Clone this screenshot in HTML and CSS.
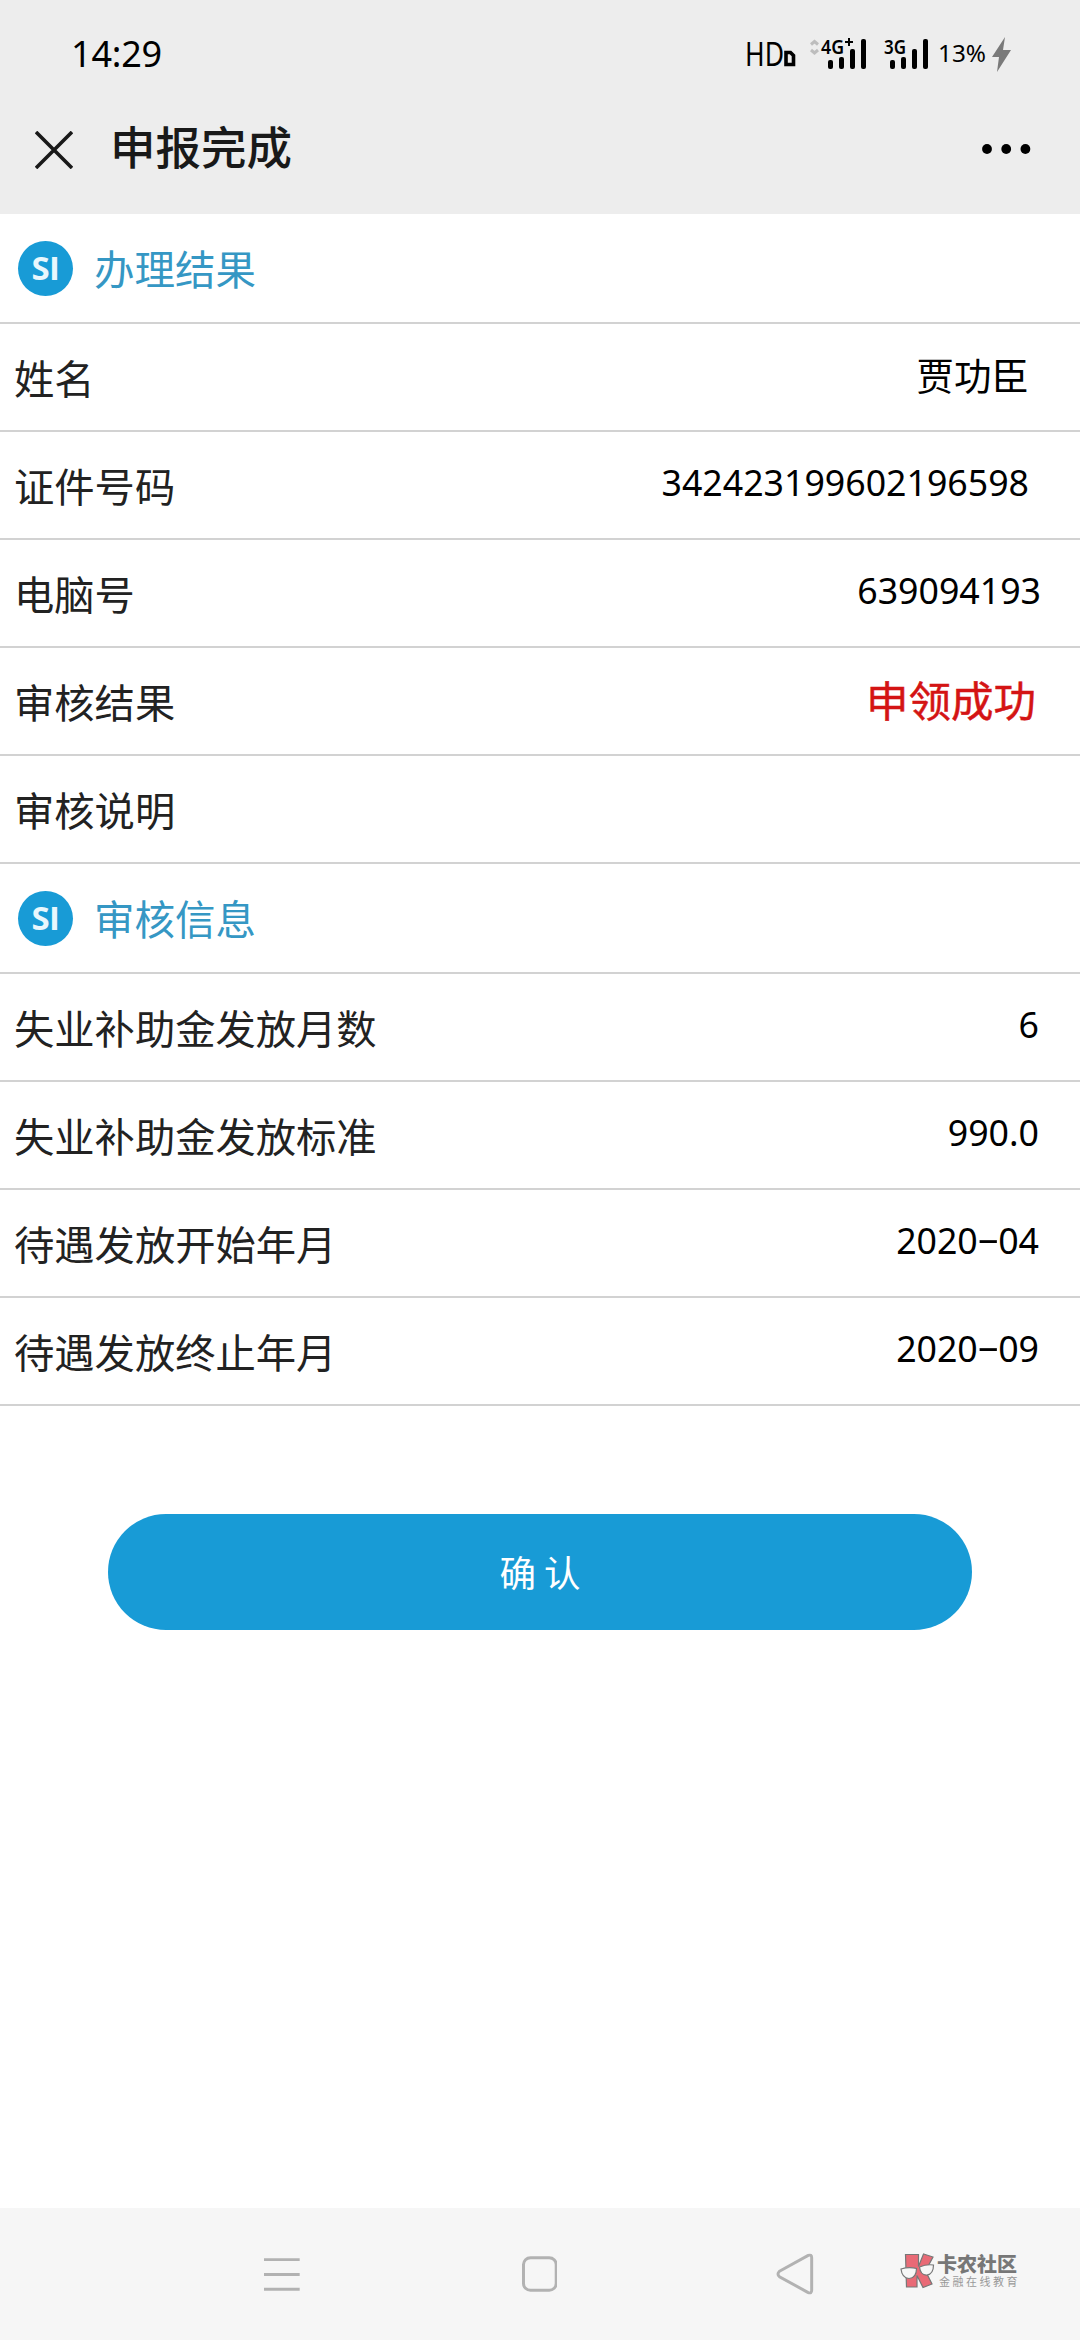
FILE: index.html
```html
<!DOCTYPE html>
<html lang="zh-CN">
<head>
<meta charset="utf-8">
<title>申报完成</title>
<link rel="stylesheet" href="styles.css">
</head>
<body>
<div class="screen">
  <header class="top">
    <div class="status">
      <span class="clock">14:29</span>
      <svg class="signals" width="300" height="54" viewBox="740 25 300 54">
        <text class="hd" x="745" y="66" textLength="39" lengthAdjust="spacingAndGlyphs">HD</text>
        <path d="M786 52.500h4.500l3 3v9h-7.500z" fill="none" stroke="#000" stroke-width="3.600"/>
        <path d="M811 44.500l3.500-3 3.500 3M811 50l3.500 3 3.500-3" fill="none" stroke="#bdbdbd" stroke-width="3"/>
        <g class="net">
          <text x="821" y="53.500" textLength="23" lengthAdjust="spacingAndGlyphs">4G</text>
          <text x="884" y="53.500" textLength="22" lengthAdjust="spacingAndGlyphs">3G</text>
        </g>
        <path d="M845 42h8M849 38v8" stroke="#000" stroke-width="2"/>
        <g fill="#000">
          <rect x="828" y="60" width="5" height="9" rx="2"/><rect x="839" y="57" width="5" height="12" rx="2"/><rect x="850" y="49" width="5" height="20" rx="2"/><rect x="861" y="39" width="5" height="30" rx="2"/>
          <rect x="890" y="60" width="5" height="9" rx="2"/><rect x="901" y="57" width="5" height="12" rx="2"/><rect x="912" y="49" width="5" height="20" rx="2"/><rect x="923" y="39" width="5" height="30" rx="2"/>
        </g>
        <text class="pct" x="938" y="62" textLength="48" lengthAdjust="spacingAndGlyphs">13%</text>
        <path d="M1005 37l-13 20h7l-2 15 14-22h-8z" fill="#7a7a7a"/>
      </svg>
    </div>
    <div class="titlebar">
      <svg class="close" width="38" height="38" viewBox="0 0 38 38"><path d="M1 1l36 36M37 1L1 37" stroke="#191919" stroke-width="3.600"/></svg>
      <h1 class="title">申报完成</h1>
      <svg class="more" width="50" height="10" viewBox="0 0 50 10"><circle cx="5" cy="5" r="4.900"/><circle cx="24.200" cy="5" r="4.900"/><circle cx="43.400" cy="5" r="4.900"/></svg>
    </div>
  </header>

  <main class="content">
    <section>
      <h2 class="section"><span class="badge">SI</span>办理结果</h2>
      <div class="row"><span class="label">姓名</span><span class="value name">贾功臣</span></div>
      <div class="row"><span class="label">证件号码</span><span class="value idno">342423199602196598</span></div>
      <div class="row"><span class="label">电脑号</span><span class="value pcno">639094193</span></div>
      <div class="row"><span class="label">审核结果</span><span class="value success">申领成功</span></div>
      <div class="row"><span class="label">审核说明</span></div>
    </section>
    <section>
      <h2 class="section"><span class="badge">SI</span>审核信息</h2>
      <div class="row"><span class="label">失业补助金发放月数</span><span class="value">6</span></div>
      <div class="row"><span class="label">失业补助金发放标准</span><span class="value">990.0</span></div>
      <div class="row"><span class="label">待遇发放开始年月</span><span class="value">2020<span class="dash">-</span>04</span></div>
      <div class="row"><span class="label">待遇发放终止年月</span><span class="value">2020<span class="dash">-</span>09</span></div>
    </section>
    <button class="confirm" type="button">确 认</button>
  </main>

  <nav class="navbar">
    <svg class="icon menu" width="36" height="40" viewBox="0 0 36 40"><path d="M0 5.500h36M0 20.500h36M0 35.500h36"/></svg>
    <svg class="icon home" width="36" height="40" viewBox="0 0 36 40"><rect x="1.500" y="3.500" width="33" height="33" rx="7"/></svg>
    <svg class="icon back" width="38" height="42" viewBox="0 0 38 42"><path d="M3.500 18.200L32.500 2.300q3.500-1.300 3.500 2.200v33q0 3.500-3.500 2.200L3.500 23.800q-3-2.800 0-5.600z"/></svg>
    <div class="brand">
      <svg width="36" height="36" viewBox="0 0 36 36">
        <path d="M5.500 1.500h13v12l5-12.500 9.500 3-7.500 14 6.500 13-9 3.500-6-12v11.500H6.500z" fill="#e96a76" stroke="#777" stroke-width="1.200"/>
        <path d="M1 16q8-2.500 15.500-.5 0 9.500-7.500 10-7-.5-8-9.500zM19.500 14q7-3 14-2 0 9-6.500 10-6.500.5-7.500-8z" fill="#f7f7f7" stroke="#777" stroke-width="1.200"/>
      </svg>
      <div class="brandtext"><span class="brandname">卡农社区</span><span class="slogan">金融在线教育</span></div>
    </div>
  </nav>
</div>
</body>
</html>
```
FILE: styles.css
```css
* { box-sizing: border-box; }
body {
  margin: 0;
  background: #fff;
  color: #222;
  font-family: "Noto Sans", "Noto Sans CJK SC", sans-serif;
}
.screen {
  width: 1080px;
  height: 2340px;
  display: flex;
  flex-direction: column;
}
.top { height: 214px; background: #ededed; }
.status {
  height: 108px;
  padding: 0 40px 0 71px;
  display: flex;
  justify-content: space-between;
  align-items: center;
}
.clock { font: 36px/40px "Noto Sans", sans-serif; color: #000; letter-spacing: -0.2px; }
.signals { display: block; margin-bottom: 4px; }
.hd { font: 33px "Noto Sans", sans-serif; }
.net { font: 600 20px "Noto Sans", sans-serif; }
.pct { font: 24px "Noto Sans", sans-serif; }
.titlebar {
  height: 82px;
  padding: 0 48px 0 35px;
  display: flex;
  align-items: center;
}
.close { margin-top: 1px; }
.title {
  margin: 0 0 0 37px;
  padding-bottom: 9px;
  font: 500 45.500px/60px "Noto Sans CJK SC", sans-serif;
  color: #191919;
}
.more { margin-left: auto; }
.content { flex: 1; }
.section, .row {
  display: flex;
  align-items: center;
  border-bottom: 2px solid #d2d2d2;
}
.section {
  height: 110px;
  margin: 0;
  padding-left: 18px;
  font: 400 40.500px/60px "Noto Sans CJK SC", sans-serif;
  color: #3597c4;
}
.badge {
  width: 55px;
  height: 55px;
  margin-right: 21px;
  border-radius: 50%;
  background: #189bd6;
  color: #e8f7fd;
  font: 700 33px/53px "Open Sans", sans-serif;
  letter-spacing: -0.5px;
  text-align: center;
}
.row {
  height: 108px;
  padding: 0 41px 0 14px;
  justify-content: space-between;
}
.label { font: 40.300px/60px "Noto Sans CJK SC", sans-serif; padding-bottom: 1px; }
.value {
  font-size: 35.700px;
  line-height: 50px;
  color: #000;
  padding-bottom: 6px;
}
.name { font-size: 37.500px; margin-right: 10px; padding-bottom: 3px; }
.idno { margin-right: 10px; }
.pcno { margin-right: -2px; }
.success {
  font-size: 42.500px;
  margin-right: 3px;
  padding-bottom: 1px;
  color: #d41414;
  -webkit-text-stroke: 0.5px #d41414;
}
.dash {
  display: inline-block;
  width: 20.400px;
  text-align: center;
  transform: translateY(-3px) scaleX(2);
}
.confirm {
  display: block;
  width: 864px;
  height: 116px;
  margin: 108px auto 0;
  padding: 0;
  border: 0;
  border-radius: 58px;
  background: #189bd6;
  color: #fff;
  font: 36.500px/114px "Noto Sans CJK SC", sans-serif;
}
.navbar {
  height: 132px;
  padding: 0 60px 0 264px;
  background: #f6f6f6;
  display: flex;
  align-items: center;
}
.icon { fill: none; stroke: #b2b2b2; stroke-width: 3; }
.home { margin-left: 222px; }
.back { margin-left: 219px; }
.brand { margin: 0 0 6px 86px; display: flex; align-items: center; }
.brandtext { display: flex; flex-direction: column; gap: 4px; margin: 0 0 0 1px; }
.brandname { font: 900 20px/16px "Noto Sans CJK SC", sans-serif; color: #777; white-space: nowrap; }
.slogan { font: 11px/11px "Noto Sans CJK SC", sans-serif; letter-spacing: 2.500px; padding-left: 2px; color: #999; white-space: nowrap; }
```
